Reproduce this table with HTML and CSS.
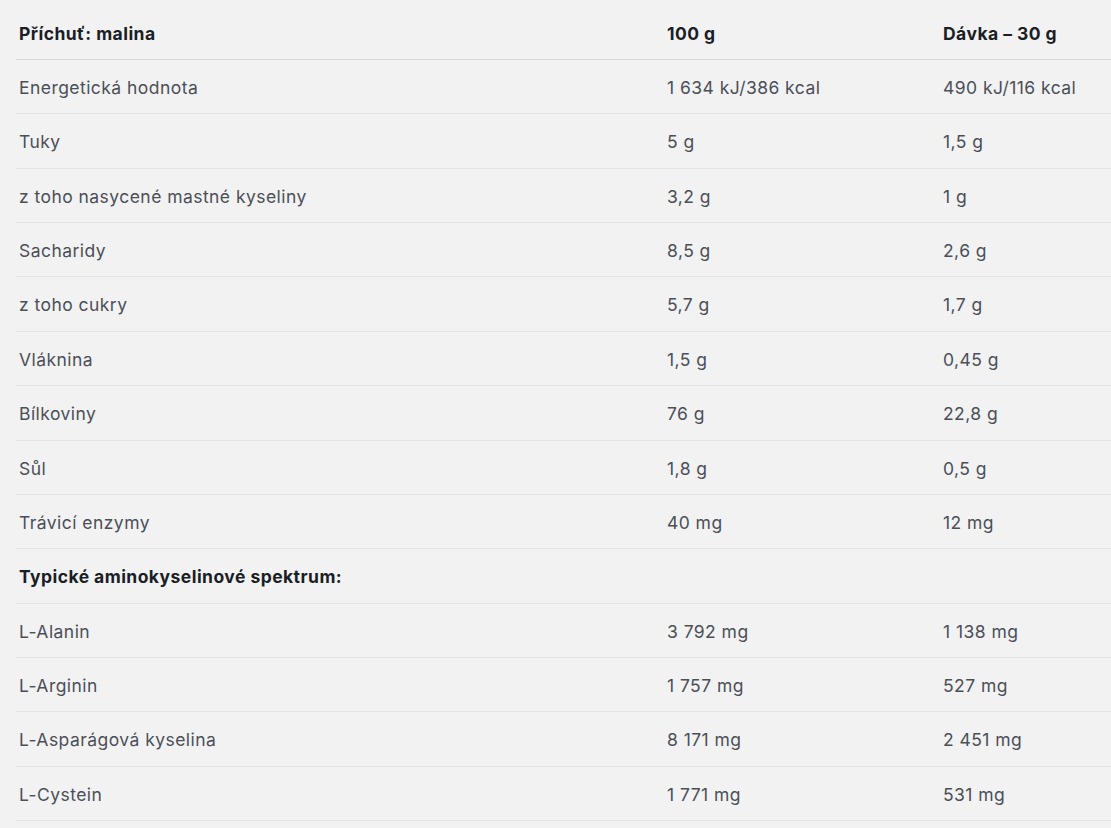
FILE: index.html
```html
<!DOCTYPE html>
<html lang="cs">
<head>
    <meta charset="utf-8">
    <title>Nutriční hodnoty</title>
    <link rel="stylesheet" href="styles.css">
</head>
<body>
    <table class="nutrition">
        <colgroup>
            <col class="col-name">
            <col class="col-value">
            <col>
        </colgroup>
        <thead>
            <tr>
                <th>Příchuť: malina</th>
                <th>100 g</th>
                <th>Dávka – 30 g</th>
            </tr>
        </thead>
        <tbody>
            <tr><td>Energetická hodnota</td><td>1 634 kJ/386 kcal</td><td>490 kJ/116 kcal</td></tr>
            <tr><td>Tuky</td><td>5 g</td><td>1,5 g</td></tr>
            <tr><td>z toho nasycené mastné kyseliny</td><td>3,2 g</td><td>1 g</td></tr>
            <tr><td>Sacharidy</td><td>8,5 g</td><td>2,6 g</td></tr>
            <tr><td>z toho cukry</td><td>5,7 g</td><td>1,7 g</td></tr>
            <tr><td>Vláknina</td><td>1,5 g</td><td>0,45 g</td></tr>
            <tr><td>Bílkoviny</td><td>76 g</td><td>22,8 g</td></tr>
            <tr><td>Sůl</td><td>1,8 g</td><td>0,5 g</td></tr>
            <tr><td>Trávicí enzymy</td><td>40 mg</td><td>12 mg</td></tr>
            <tr class="section"><td colspan="3">Typické aminokyselinové spektrum:</td></tr>
            <tr><td>L-Alanin</td><td>3 792 mg</td><td>1 138 mg</td></tr>
            <tr><td>L-Arginin</td><td>1 757 mg</td><td>527 mg</td></tr>
            <tr><td>L-Asparágová kyselina</td><td>8 171 mg</td><td>2 451 mg</td></tr>
            <tr><td>L-Cystein</td><td>1 771 mg</td><td>531 mg</td></tr>
        </tbody>
    </table>
</body>
</html>
```

FILE: styles.css
```css
* {
    margin: 0;
    padding: 0;
    box-sizing: border-box;
}

body {
    background: #f2f2f2;
    font-family: "Inter", "Open Sans", "Liberation Sans", sans-serif;
    color: #4b4f58;
    overflow: hidden;
}

.nutrition {
    margin-left: 16px;
    width: calc(100% - 16px);
    table-layout: fixed;
    border-collapse: collapse;
    font-size: 17.5px;
    letter-spacing: 0.45px;
}

.col-name {
    width: 648px;
}

.col-value {
    width: 276px;
}

.nutrition th {
    text-align: left;
    font-weight: 700;
    color: #1b1e26;
    padding: 23px 3px 14px;
    line-height: 22px;
    border-bottom: 1px solid #d6d6d6;
    white-space: nowrap;
}

.nutrition td {
    padding: 17px 3px 15px;
    line-height: 21.36px;
    border-bottom: 1px solid #e4e4e4;
    white-space: nowrap;
}

.nutrition .section td {
    font-weight: 700;
    color: #1b1e26;
}
```
